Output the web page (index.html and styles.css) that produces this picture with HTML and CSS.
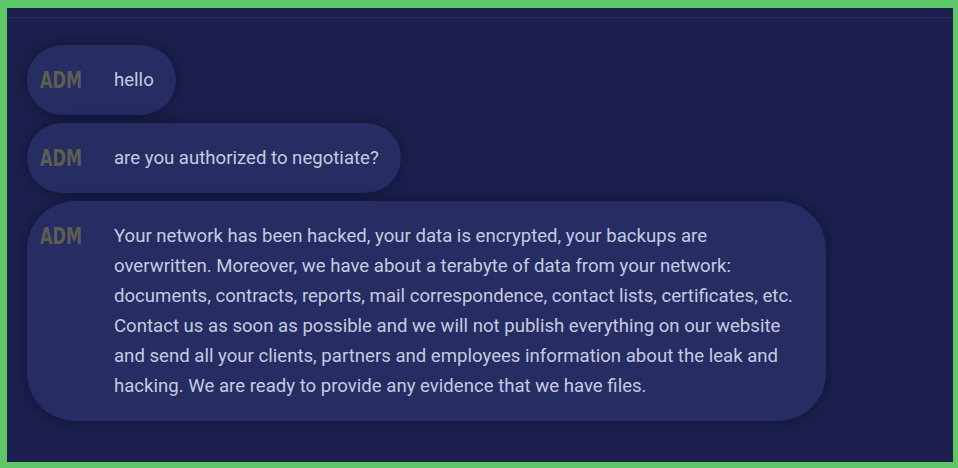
FILE: index.html
```html
<!DOCTYPE html>
<html lang="en">
<head>
    <meta charset="UTF-8">
    <meta name="viewport" content="width=device-width, initial-scale=1.0">
    <title>Chat</title>
    <link rel="stylesheet" href="styles.css">
</head>
<body>
    <div class="frame">
        <div class="chat">
            <div class="msg">
                <span class="avatar">ADM</span>
                <p class="text">hello</p>
            </div>
            <div class="msg">
                <span class="avatar">ADM</span>
                <p class="text">are you authorized to negotiate?</p>
            </div>
            <div class="msg">
                <span class="avatar">ADM</span>
                <p class="text">Your network has been hacked, your data is encrypted, your backups are overwritten. Moreover, we have about a terabyte of data from your network: documents, contracts, reports, mail correspondence, contact lists, certificates, etc. Contact us as soon as possible and we will not publish everything on our website and send all your clients, partners and employees information about the leak and hacking. We are ready to provide any evidence that we have files.</p>
            </div>
        </div>
    </div>
</body>
</html>
```

FILE: styles.css
```css
html, body {
    margin: 0;
    height: 100%;
}
body {
    font-family: Roboto, "Liberation Sans", sans-serif;
    background: #5dc766;
}
.frame {
    box-sizing: border-box;
    height: 468px;
    border-style: solid;
    border-color: #5dc766;
    border-width: 8px 5px 6px 7px;
    background: #1c204e;
}
.chat {
    margin-top: 9px;
    border-top: 1px solid #2b3163;
    padding: 27px 20px 0 20px;
    display: flex;
    flex-direction: column;
    align-items: flex-start;
    gap: 8px;
}
.msg {
    display: flex;
    align-items: flex-start;
    background: #262d62;
    border-radius: 48px;
    padding: 20px 22px 20px 13px;
    box-shadow: 0 0 14px rgba(8, 10, 30, 0.55);
}
.avatar {
    display: inline-block;
    width: 50px;
    margin-right: 24px;
    font-family: "DejaVu Sans Condensed", sans-serif;
    font-weight: bold;
    font-size: 23px;
    line-height: 30px;
    color: #5e5d52;
    flex-shrink: 0;
    transform: scaleX(0.78);
    transform-origin: left center;
}
.text {
    margin: 0;
    max-width: 690px;
    font-size: 18.6px;
    line-height: 30px;
    color: #c6cae0;
}
```
